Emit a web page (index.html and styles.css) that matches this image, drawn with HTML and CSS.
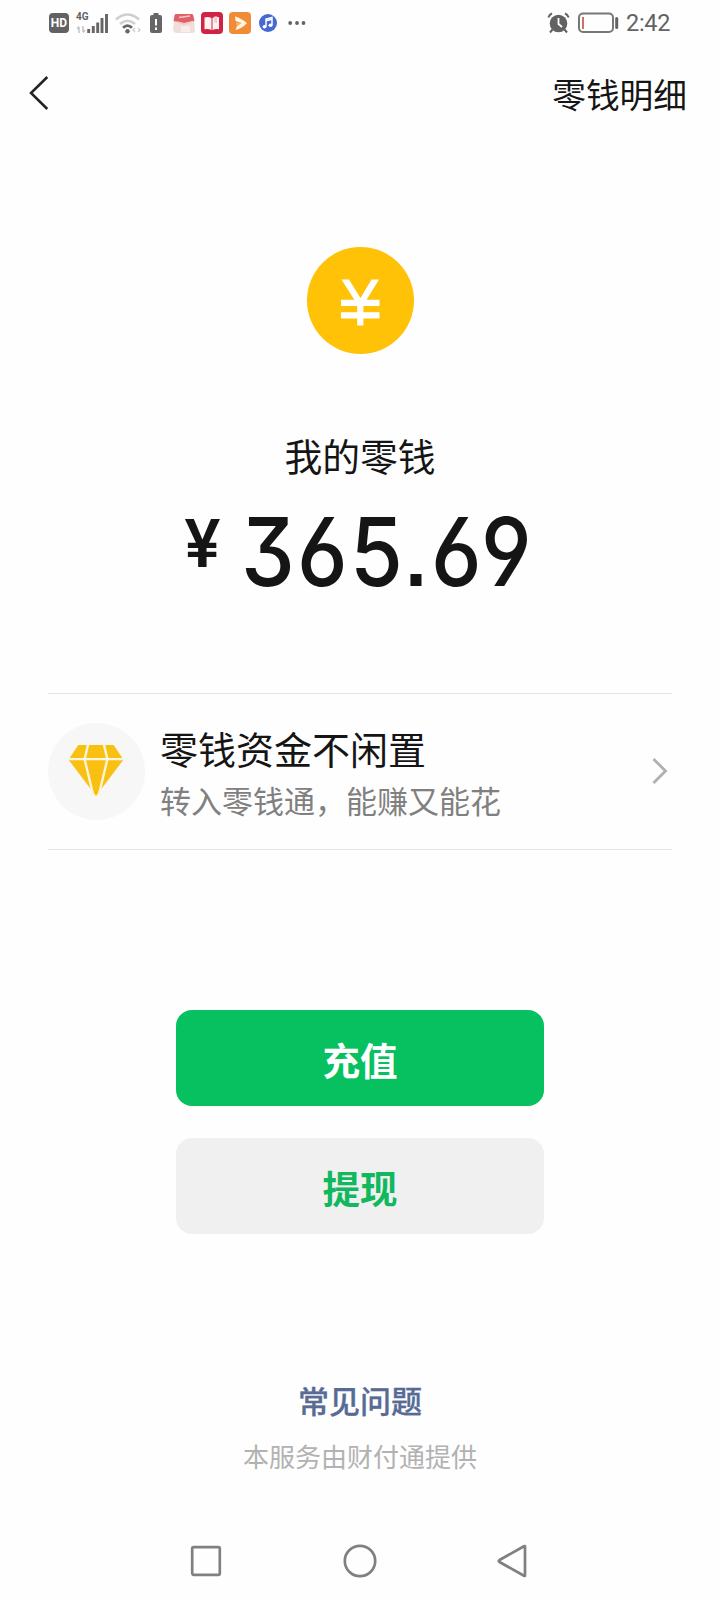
FILE: index.html
```html
<!DOCTYPE html>
<html lang="zh-CN">
<head>
<meta charset="utf-8">
<title>零钱</title>
<link rel="stylesheet" href="styles.css">
</head>
<body>
<div class="screen">
  <div class="status">
    <div class="status-left">
      <span class="hd">HD</span>
      <span class="network">
        <span class="network-type">4G</span>
        <svg class="signal" width="32" height="22" viewBox="0 0 32 22">
          <path d="M3 21v-6M1 17l2-2.500M7 14v6M9 18l-2 2.500" stroke="#c4c4c4" stroke-width="1.500" fill="none"/>
          <path d="M12.700 21v-4M17.300 21v-7M21.700 21v-10.500M26 21v-15M30.500 21v-19" stroke="#666" stroke-width="2.900" fill="none"/>
        </svg>
      </span>
      <svg class="wifi" width="26" height="22" viewBox="0 0 26 22" fill="none">
        <path d="M1 7.500Q12.500-2.500 24 7.500M5 12Q12.500 5.500 20 12" stroke="#cfcfcf" stroke-width="2.600"/>
        <path d="M8 15.800Q12.500 11.500 17 15.800" stroke="#666" stroke-width="2.800"/>
        <circle cx="12.500" cy="19.300" r="2.200" fill="#666"/>
        <path d="M20 16l-2 2 2 2M23 16l2 2-2 2" stroke="#ccc" stroke-width="1.200"/>
      </svg>
      <svg class="battery-alert" width="14" height="22" viewBox="0 0 14 22">
        <path d="M4.500 1h5v2H11a2 2 0 0 1 2 2v14a2 2 0 0 1-2 2H3a2 2 0 0 1-2-2V5a2 2 0 0 1 2-2h1.500z" fill="#666"/>
        <path d="M7 7v6.500M7 15.500V18" stroke="#fff" stroke-width="2"/>
      </svg>
      <svg class="app-pink" width="24" height="22" viewBox="0 0 24 22">
        <path d="M2 8h20l1 10q0 3-3 3H5q-3 0-4-3z" fill="#efdeda"/>
        <path d="M3.500 2h16.500q1 0 1.300 1.500L22.500 9 12 11 1.500 9 2.500 3.500Q2.700 2 3.500 2z" fill="#df6068"/>
        <path d="M7 5.500l11-1.500M5 10l7 2 9-2.500" stroke="#f8c6c3" stroke-width="1.500" fill="none"/>
        <path d="M9 14h9v6H9z" fill="#f7edea"/>
      </svg>
      <svg class="app-red" width="22" height="22" viewBox="0 0 22 22">
        <rect width="22" height="22" rx="4" fill="#cf2446"/>
        <path d="M3.500 5.500q4-1 7 .500v12q-3-1.500-7-.800zM11.500 6q3-2 6.500-.800v12q-3.500-.700-6.500.800z" fill="#fff2ef"/>
        <path d="M13 4.500v7l1.500-1.500 1.500 1.500v-7z" fill="#f4cbd0"/>
      </svg>
      <svg class="app-orange" width="22" height="22" viewBox="0 0 22 22">
        <rect width="22" height="22" rx="4" fill="#f08c38"/>
        <path d="M6 4.500q5 1 12 6.500-5 5.500-11.500 7l1.500-4 4.500-3-6-2z" fill="#fff4de"/>
        <path d="M7 10.500l5.500.500-4.500 3z" fill="#f5b96a"/>
      </svg>
      <svg class="app-music" width="18" height="18" viewBox="0 0 18 18">
        <circle cx="9" cy="9" r="9" fill="#4668d2"/>
        <path d="M7 12.500V5l6-1.500V11M7 6.800l6-1.500" stroke="#fff" stroke-width="1.500" fill="none"/>
        <ellipse cx="5.500" cy="12.700" rx="2" ry="1.700" fill="#fff"/>
        <ellipse cx="11.500" cy="11.300" rx="2" ry="1.700" fill="#fff"/>
      </svg>
      <svg class="more" width="18" height="4" viewBox="0 0 18 4" fill="#626262">
        <circle cx="2.200" cy="2" r="1.900"/><circle cx="9" cy="2" r="1.900"/><circle cx="15.500" cy="2" r="1.900"/>
      </svg>
    </div>
    <div class="status-right">
      <svg width="23" height="22" viewBox="0 0 23 22" fill="none">
        <circle cx="11.500" cy="11.500" r="8.800" fill="#626262"/>
        <path d="M1.300 5.500Q2.500 2.500 5 1.300M21.700 5.500Q20.500 2.500 18 1.300M5.500 17.500L3 20.500M17.500 17.500l2.500 3" stroke="#626262" stroke-width="2"/>
        <path d="M11.500 6v6l3.500 3" stroke="#fff" stroke-width="1.800"/>
      </svg>
      <svg class="battery" width="41" height="22" viewBox="0 0 41 22" fill="none">
        <rect x="1" y="1.500" width="34" height="18.500" rx="4" stroke="#777" stroke-width="2"/>
        <path d="M5 5v12" stroke="#c87468" stroke-width="2"/>
        <path d="M38.700 6.500v9" stroke="#626262" stroke-width="3" stroke-linecap="round"/>
      </svg>
      <span class="clock">2:42</span>
    </div>
  </div>

  <header class="header">
    <svg width="20" height="34" viewBox="0 0 20 34" fill="none">
      <path d="M18.300 1L2 17l16.300 16" stroke="#222" stroke-width="2.500"/>
    </svg>
    <span class="header-link">零钱明细</span>
  </header>

  <main class="balance">
    <svg class="coin" width="107" height="107" viewBox="0 0 107 107">
      <circle cx="53.500" cy="53.500" r="53.500" fill="#ffc207"/>
      <path d="M34 55.800h38.500M34 68.300h38.500M53.300 52v26.500" stroke="#fff" stroke-width="6.200" fill="none"/>
      <path d="M34.500 32.500h7.500l11.500 18.500L64.500 32.500H72L57 57h-7z" fill="#fff"/>
    </svg>
    <div class="balance-label">我的零钱</div>
    <div class="amount"><span class="currency">¥</span><span class="digits">365.69</span></div>
  </main>

  <section class="promo">
    <span class="promo-icon">
      <svg width="56" height="52" viewBox="0 0 54 50">
        <path d="M10 1h34l9.500 14L27 50 .500 15z" fill="#fac011"/>
        <path d="M0 14.500h54M19.500 0L16 14.500 24.500 50M34.500 0L38 14.500 29.500 50" stroke="#fbf5df" stroke-width="2.300" fill="none"/>
      </svg>
    </span>
    <div class="promo-text">
      <div class="promo-title">零钱资金不闲置</div>
      <div class="promo-sub">转入零钱通，能赚又能花</div>
    </div>
    <svg class="promo-arrow" width="16" height="28" viewBox="0 0 16 28" fill="none">
      <path d="M1.500 2l12 12-12 12" stroke="#b0b0b0" stroke-width="2.800"/>
    </svg>
  </section>

  <div class="actions">
    <div class="button primary">充值</div>
    <div class="button secondary">提现</div>
  </div>

  <footer class="footer">
    <div class="faq">常见问题</div>
    <div class="provider">本服务由财付通提供</div>
  </footer>

  <nav class="system-nav">
    <svg width="34" height="36" viewBox="0 0 34 36" fill="none" stroke="#808080" stroke-width="2.700">
      <rect x="3.200" y="4.200" width="27.600" height="27.600" rx="1.500"/>
    </svg>
    <svg width="34" height="36" viewBox="0 0 34 36" fill="none" stroke="#808080" stroke-width="2.700">
      <circle cx="18" cy="18" r="15.200"/>
    </svg>
    <svg width="34" height="36" viewBox="0 0 34 36" fill="none" stroke="#808080" stroke-width="2.700" stroke-linejoin="round">
      <path d="M30 3.500v29q0 .800-1 .300L4.500 19q-1.500-1 0-2L29 3.200q1-.500 1 .300z"/>
    </svg>
  </nav>
</div>
</body>
</html>
```
FILE: styles.css
```css
* { box-sizing: border-box; }

body {
  margin: 0;
  background: #fefefe;
  color: #151515;
  font-family: "Noto Sans CJK SC", sans-serif;
}

svg { display: block; flex: none; overflow: visible; }

.screen {
  display: flex;
  flex-direction: column;
  width: 720px;
  height: 1600px;
}

.status {
  display: flex;
  justify-content: space-between;
  height: 46px;
  padding: 0 49px 0 49px;
  color: #626262;
}

.status-left, .status-right { display: flex; align-items: center; height: 45px; }

.hd {
  width: 20px;
  height: 20px;
  border-radius: 4px;
  background: #626262;
  color: #fff;
  font: bold 12px/20px "Roboto", sans-serif;
  text-align: center;
}

.network { position: relative; margin-left: 7px; }
.network-type {
  position: absolute;
  left: 0;
  top: 0;
  font: bold 10px/10px "Roboto", sans-serif;
}

.wifi { margin-left: 7px; }
.battery-alert { margin-left: 8px; }
.app-pink { margin-left: 9px; }
.app-red { margin-left: 5px; }
.app-orange { margin-left: 6px; }
.app-music { margin-left: 8px; }
.more { margin-left: 11px; }
.battery { margin-left: 8px; }

.clock {
  margin-left: 7px;
  width: 45px;
  padding-top: 1px;
  font: 23.5px/28px "Roboto", sans-serif;
  letter-spacing: -0.3px;
  white-space: nowrap;
}

.header {
  display: flex;
  align-items: center;
  justify-content: space-between;
  height: 94px;
  padding: 0 33px 0 29px;
}

.header-link { padding-top: 1px; font-size: 33.7px; line-height: 50px; }

.balance {
  display: flex;
  flex-direction: column;
  align-items: center;
  height: 553px;
  padding-top: 107px;
}

.balance-label { margin-top: 73px; font-size: 37.8px; line-height: 56px; }

.amount {
  display: flex;
  align-items: flex-start;
  width: 352px;
  height: 96px;
  margin-top: 21px;
  font-family: "Inter", sans-serif;
  font-optical-sizing: none;
  font-feature-settings: "cv03", "cv04", "cv09", "ss07";
}

.currency {
  flex: none;
  width: 57px;
  padding-top: 6px;
  font-size: 66px;
  font-weight: 620;
  line-height: 66px;
  transform: scaleX(0.99);
  transform-origin: left;
}

.digits {
  flex: none;
  font-size: 95px;
  font-weight: 530;
  line-height: 96px;
  letter-spacing: 2.5px;
  transform: scaleX(0.9);
  transform-origin: left;
}

.promo {
  display: flex;
  align-items: center;
  height: 157px;
  margin: 0 48px;
  border-top: 1px solid #e3e3e3;
  border-bottom: 1px solid #e3e3e3;
}

.promo-icon {
  display: flex;
  align-items: center;
  justify-content: center;
  width: 97px;
  height: 97px;
  padding: 0 2px 3px 0;
  border-radius: 50%;
  background: #f6f7f6;
}

.promo-text { flex: 1; margin-left: 15px; padding-top: 3px; }
.promo-title { font-size: 38px; line-height: 54px; }
.promo-sub { color: #808080; font-size: 31px; line-height: 50px; }
.promo-arrow { margin: 0 4px 2px 0; }

.actions {
  display: flex;
  flex-direction: column;
  gap: 32px;
  align-items: center;
  margin-top: 160px;
}

.button {
  width: 368px;
  height: 96px;
  border-radius: 16px;
  font-size: 37.5px;
  font-weight: 700;
  line-height: 97px;
  text-align: center;
}

.primary { background: #07c160; color: #fff; }
.secondary { background: #f0f0f0; color: #12b85f; }

.footer { margin-top: 143px; text-align: center; }
.faq {
  color: #576b95;
  font-size: 31px;
  font-weight: 500;
  line-height: 46px;
  -webkit-text-stroke: 0.3px #576b95;
}
.provider { margin-top: 14px; color: #b2b2b2; font-size: 26px; line-height: 38px; }

.system-nav {
  display: flex;
  justify-content: space-between;
  margin: auto 191px 21px 189px;
}
```
